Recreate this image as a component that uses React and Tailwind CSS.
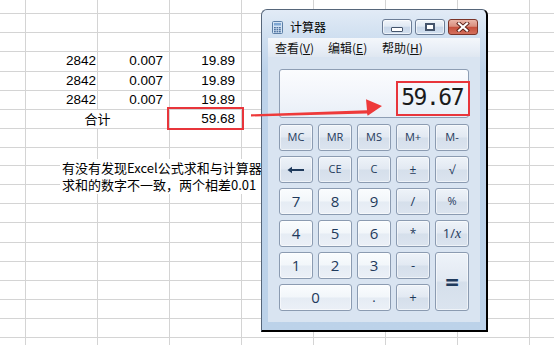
import React from "react";

const rowCls = [
  "h-[14px]", "h-[19px]", "h-[19px]", "h-[20px]", "h-[19px]", "h-[19px]", "h-[19px]",
  "h-[19px]", "h-[18px]", "h-[19px]", "h-[19px]", "h-[19px]", "h-[20px]", "h-[19px]",
  "h-[19px]", "h-[19px]", "h-[19px]", "h-[19px]", "h-[10px]",
];
const colCls = ["w-[26px]", "w-[72px]", "w-[72px]", "w-[72px]", "w-[72px]", "w-[72px]", "w-[72px]", "w-[72px]", "w-[30px]"];

const cellBase = "shrink-0 border-r border-b border-[#d4d4d4] flex items-center overflow-visible whitespace-nowrap";

function Sheet() {
  return (
    <div className="flex flex-col font-['Liberation_Sans',sans-serif] text-[13.5px] text-black">
      {rowCls.map((rc, r) => {
        const dataRow = r >= 3 && r <= 5;
        if (r === 6) {
          return (
            <div key={r} className={`flex shrink-0 ${rc}`}>
              <div className={`${cellBase} w-[26px]`} />
              <div className={`${cellBase} w-[144px] justify-center font-['Noto_Sans_CJK_SC',sans-serif] text-[13px]`}>合计</div>
              <div className={`${cellBase} justify-end w-[72px] pr-[6px]`}>59.68</div>
              {colCls.slice(4).map((cc, c) => (
                <div key={c} className={`${cellBase} ${cc}`} />
              ))}
            </div>
          );
        }
        return (
          <div key={r} className={`flex shrink-0 ${rc}`}>
            {colCls.map((cc, c) => {
              let content = null;
              let pad = "";
              if (dataRow && c === 1) { content = "2842"; pad = "pr-[1px]"; }
              if (dataRow && c === 2) { content = "0.007"; pad = "pr-[6px]"; }
              if (dataRow && c === 3) { content = "19.89"; pad = "pr-[6px]"; }
              return (
                <div key={c} className={`${cellBase} justify-end ${cc} ${pad}`}>{content}</div>
              );
            })}
          </div>
        );
      })}
    </div>
  );
}

function CalcIcon() {
  return (
    <svg width="11" height="13" viewBox="0 0 11 13">
      <rect x="0.5" y="0.5" width="10" height="12" rx="1" fill="#d3e3f4" stroke="#5b7ea6" />
      <rect x="2" y="2" width="7" height="2.5" fill="#7fa7d3" />
      {[0, 1, 2].map((r) =>
        [0, 1, 2].map((c) => (
          <rect key={`${r}-${c}`} x={2 + c * 2.5} y={6 + r * 2} width="1.8" height="1.4" fill="#4f73a0" />
        ))
      )}
    </svg>
  );
}

function TitleButtons() {
  const blue = "h-[16px] rounded-[3px] border border-[#6b7c95] bg-[linear-gradient(to_bottom,#f1f5fa_0%,#e0e9f3_45%,#c8d7e9_50%,#d3e0ef_100%)] flex items-center justify-center shadow-[inset_0_0_0_1px_rgba(255,255,255,0.6)]";
  return (
    <div className="ml-auto mr-[2px] flex gap-[3px]">
      <div className={`${blue} w-[30px]`}>
        <div className="mt-[5px] w-[12px] h-[5px] rounded-[1px] border border-[#44546b] bg-white" />
      </div>
      <div className={`${blue} w-[30px]`}>
        <div className="w-[10px] h-[8px] border-2 border-[#44546b] bg-white" />
      </div>
      <div className="w-[30px] h-[16px] rounded-[3px] border border-[#7a3428] bg-[linear-gradient(to_bottom,#eab6a9_0%,#d98f7f_45%,#c6503d_52%,#d4705c_100%)] flex items-center justify-center">
        <svg width="14" height="10" viewBox="0 0 14 10">
          <path d="M3 1.5 L11 8.5 M11 1.5 L3 8.5" stroke="#5b2119" strokeWidth="4" strokeLinecap="square" />
          <path d="M3 1.5 L11 8.5 M11 1.5 L3 8.5" stroke="#ffffff" strokeWidth="2.2" strokeLinecap="square" />
        </svg>
      </div>
    </div>
  );
}

function BackArrow() {
  return (
    <svg width="18" height="8" viewBox="0 0 18 8">
      <path d="M4 4 H17" stroke="#1f3a5c" strokeWidth="2" />
      <path d="M0.5 4 L5 0.8 L5 7.2 Z" fill="#1f3a5c" />
    </svg>
  );
}

const numBg = "bg-[linear-gradient(to_bottom,#fafcfe_0%,#f2f6fa_48%,#e5ecf4_52%,#ebf0f7_100%)]";
const opBg = "bg-[linear-gradient(to_bottom,#eef3f9_0%,#e2e9f2_48%,#d5dfeb_52%,#dbe4ef_100%)]";

function Key({ children, num, cls = "", text = "text-[11px]" }) {
  return (
    <div
      className={`rounded-[3px] border border-[#8b9bb1] ${num ? numBg : opBg} flex items-center justify-center text-[#1f3a5c] font-['Open_Sans',sans-serif] shadow-[inset_0_0_0_1px_rgba(255,255,255,0.55)] ${text} ${cls}`}
    >
      {children}
    </div>
  );
}

function Calculator() {
  return (
    <div className="absolute left-[261px] top-[9px] w-[227px] h-[323px] flex flex-col rounded-t-[6px] border-t border-l border-t-[#56667a] border-l-[#56667a] border-r-2 border-b-2 border-r-black border-b-black bg-[linear-gradient(to_bottom,#e2ebf6_0px,#cfdff0_28px,#bed3ea_60px,#bcd2e9_100%)] px-[6px] pb-[8px]">
      <div className="h-[28px] shrink-0 flex items-start pt-[9px]">
        <div className="ml-[4px] mt-[2px]"><CalcIcon /></div>
        <div className="ml-[7px] leading-[16px] text-[12px] text-black font-['Noto_Sans_CJK_SC',sans-serif]">计算器</div>
        <TitleButtons />
      </div>
      <div className="h-[19px] shrink-0 flex items-center pl-[7px] bg-[linear-gradient(to_bottom,#f4f7fb_0%,#e8eef6_60%,#dfe7f1_100%)] text-[12px] text-[#111] font-['Noto_Sans_CJK_SC',sans-serif] leading-[14px]">
        <div className="w-[53px]">查看(<span className="underline">V</span>)</div>
        <div className="w-[54px]">编辑(<span className="underline">E</span>)</div>
        <div>帮助(<span className="underline">H</span>)</div>
      </div>
      <div className="flex-1 flex flex-col bg-[#d9e4f1] px-[11px] pt-[12px] pb-[11px]">
        <div className="h-[49px] shrink-0 rounded-[3px] border border-[#8e9eb4] bg-[linear-gradient(to_bottom,#fbfcfe_0%,#f3f6fb_50%,#e9eff7_100%)] flex justify-end items-start pt-[16px] pr-[5px]">
          <span className="font-['DejaVu_Sans_Mono',monospace] text-[23px] leading-[23px] tracking-[-1.5px] text-[#1b1b1b]">59.67</span>
        </div>
        <div className="mt-[6px] grid grid-cols-[repeat(5,34px)] grid-rows-[repeat(6,27px)] gap-[5px]">
          <Key>MC</Key>
          <Key>MR</Key>
          <Key>MS</Key>
          <Key>M+</Key>
          <Key>M-</Key>

          <Key><BackArrow /></Key>
          <Key>CE</Key>
          <Key>C</Key>
          <Key text="text-[12px]">±</Key>
          <Key text="text-[12px]">√</Key>

          <Key num text="text-[15px]">7</Key>
          <Key num text="text-[15px]">8</Key>
          <Key num text="text-[15px]">9</Key>
          <Key text="text-[13px]">/</Key>
          <Key text="text-[11px]">%</Key>

          <Key num text="text-[15px]">4</Key>
          <Key num text="text-[15px]">5</Key>
          <Key num text="text-[15px]">6</Key>
          <Key text="text-[12px]">*</Key>
          <Key text="text-[13px]">1/<span className="italic font-['Liberation_Serif',serif] text-[14px]">x</span></Key>

          <Key num text="text-[15px]">1</Key>
          <Key num text="text-[15px]">2</Key>
          <Key num text="text-[15px]">3</Key>
          <Key text="text-[13px]">-</Key>
          <Key cls="row-span-2" text="text-[24px] font-bold">=</Key>

          <Key num cls="col-span-2" text="text-[15px]">0</Key>
          <Key num text="text-[13px]">.</Key>
          <Key text="text-[13px]">+</Key>
        </div>
      </div>
    </div>
  );
}

export default function App() {
  return (
    <div className="relative w-[554px] h-[345px] overflow-hidden bg-white">
      <Sheet />
      <div className="absolute left-[60px] top-[159px] w-[202px] bg-white px-[2px] font-['Noto_Sans_CJK_SC',sans-serif] text-[13px] leading-[17.4px] text-black whitespace-nowrap">
        <div>有没有发现Excel公式求和与计算器</div>
        <div>求和的数字不一致，两个相差0.01</div>
      </div>
      <div className="absolute left-[167px] top-[107px] w-[77px] h-[23px] border-2 border-[#e8353b]" />
      <Calculator />
      <div className="absolute left-[396px] top-[81px] w-[74px] h-[35px] border-2 border-[#e8353b]" />
      <svg className="absolute left-0 top-0 pointer-events-none" width="554" height="345" viewBox="0 0 554 345">
        <polygon
          points="251,114.3 367,110.3 366,99.3 382,106 367.7,115.7 367,113.4 251,116.5"
          fill="#ee3a3a"
        />
      </svg>
    </div>
  );
}
